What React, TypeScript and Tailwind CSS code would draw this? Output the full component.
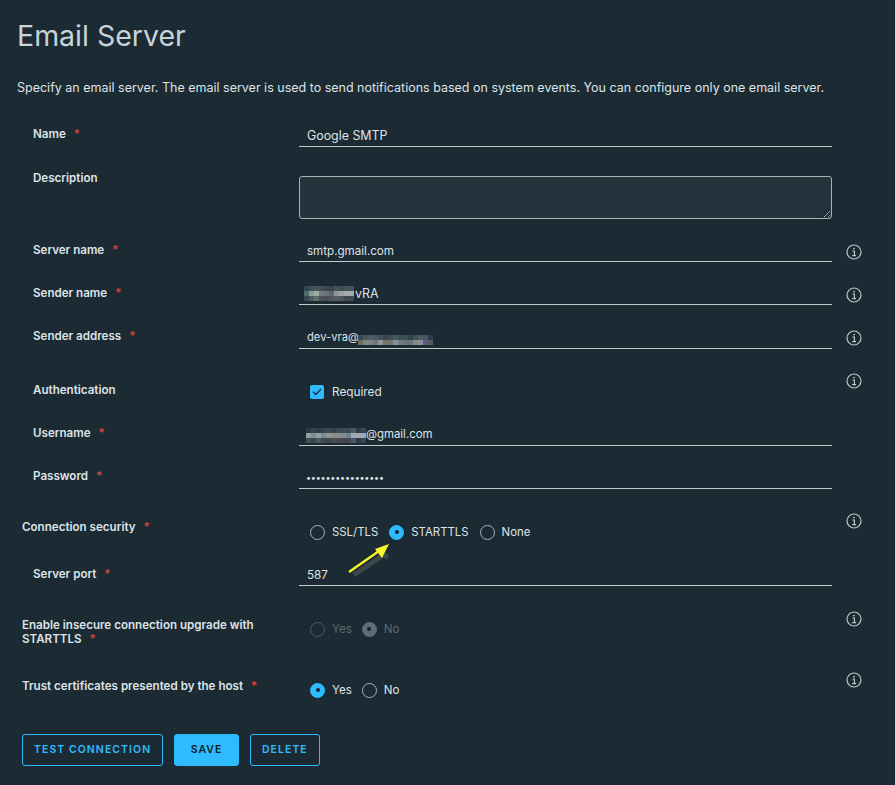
import React from "react";

const Info = () => (
  <svg width="16" height="16" viewBox="0 0 16 16" fill="none" stroke="#bcc5ca" strokeWidth="1.2">
    <circle cx="8" cy="8" r="7" />
    <circle cx="8" cy="4.6" r="0.9" fill="#bcc5ca" stroke="none" />
    <path d="M6.4 7h2v4.6M6.2 11.7h3.8" strokeWidth="1.2" />
  </svg>
);

const Mosaic = ({ rows, size = 5 }: { rows: string[][]; size?: number }) => (
  <span className="inline-flex flex-col align-middle">
    {rows.map((r, i) => (
      <span key={i} className="flex">
        {r.map((c, j) => (
          <span key={j} className="block" style={{ width: size, height: size, background: c }} />
        ))}
      </span>
    ))}
  </span>
);

const m1 = [
  ["#2f4a50", "#3f5055", "#48565b", "#414e56", "#3a4750", "#384450", "#475259", "#3f4d55", "#44525a", "#44525a"],
  ["#4f6a6c", "#8b9a94", "#a0aaa5", "#6e7b7f", "#6a7480", "#5e6873", "#8f969b", "#9aa1a5", "#a3a9ab", "#a3a9ab"],
  ["#324b50", "#4e5e60", "#5f706c", "#4b5359", "#484f59", "#4e555c", "#595d60", "#4f585c", "#3f4b52", "#3f4b52"],
];
const m2 = [
  ["#3a4a52", "#47555d", "#4d5b63", "#4a5961", "#40505a", "#37474f", "#424f57", "#4a5860", "#3d4d55", "#3f4f57", "#33434c", "#404e56", "#4c5a62", "#4a5660", "#2e3c45"],
  ["#6f6d60", "#83877f", "#7d8387", "#6a7785", "#8c948c", "#7d7460", "#6b747c", "#87908c", "#73788a", "#6d7479", "#6a7478", "#83898c", "#8b9090", "#5a5a86", "#56585c"],
];
const m3 = [
  ["#2a3a44", "#33444f", "#2f3f4a", "#37454d", "#3b4850", "#34424b", "#3d4a52", "#3f4c55", "#3a4a52", "#4d5a64", "#2d3b44", "#3a4852"],
  ["#8ea19e", "#7f8c9a", "#96a0a8", "#7c8890", "#8a9499", "#8c8d80", "#858f8f", "#7d8993", "#70808c", "#a0a8b2", "#a0a8b2", "#a0a8b2"],
  ["#3f5056", "#3a4650", "#4a5660", "#3f4a50", "#3f4850", "#4a4d48", "#45494a", "#44484e", "#404852", "#4c5862", "#2b3a44", "#3a4650"],
];

const Req = () => <span className="text-[#d9473a] ml-[8px]">*</span>;

const Row = ({
  h, label, req, left = false, info, infoTop = 8, children,
}: {
  h: number; label: React.ReactNode; req?: boolean; left?: boolean; info?: boolean; infoTop?: number; children?: React.ReactNode;
}) => (
  <div className="flex items-start" style={{ height: h }}>
    <div className={`w-[299px] pt-[7px] pr-[30px] shrink-0 font-semibold leading-[14px] text-[11.6px] text-[#dde4e8] ${left ? "pl-[22px]" : "pl-[33px]"}`}>
      {label}
      {req && <Req />}
    </div>
    <div className="w-[533px] shrink-0">{children}</div>
    {info && (
      <div className="ml-[14px]" style={{ marginTop: infoTop }}>
        <Info />
      </div>
    )}
  </div>
);

const Field = ({ h, children, pt }: { h: number; pt: number; children: React.ReactNode }) => (
  <div
    className="border-b border-[#c3c9cc] pl-[8px] text-[11.7px] leading-[16px] text-[#dde4e8] flex items-start"
    style={{ height: h, paddingTop: pt }}
  >
    {children}
  </div>
);

const Radio = ({ on, dim, label }: { on?: boolean; dim?: boolean; label: string }) => (
  <span className={`flex items-center ${dim ? "text-[#5a6b75]" : "text-[#dde4e8]"}`}>
    <span
      className={`w-[15px] h-[15px] rounded-full flex items-center justify-center border ${
        on ? (dim ? "bg-[#5d6e78] border-[#5d6e78]" : "bg-[#2ebcff] border-[#2ebcff]") : dim ? "border-[#4b5b65]" : "border-[#aab3b8]"
      }`}
    >
      {on && <span className="w-[4px] h-[4px] rounded-full bg-[#14222b]" />}
    </span>
    <span className="ml-[7px]">{label}</span>
  </span>
);

const Btn = ({ children, solid }: { children: React.ReactNode; solid?: boolean }) => (
  <button
    className={`h-[32px] rounded-[3px] border border-[#2ebcff] text-[10.5px] font-semibold tracking-[1.05px] ${
      solid ? "bg-[#2ebcff] text-[#0e1a22] px-[15.5px]" : "text-[#2ebcff] px-[11px]"
    }`}
  >
    {children}
  </button>
);

export default function App() {
  return (
    <div
      className="relative w-[895px] h-[785px] overflow-hidden bg-[#1c2a33] text-[#dde4e8]"
      style={{ fontFamily: "Inter, 'Liberation Sans', sans-serif" }}
    >
      <h1 className="pl-[17px] pt-[20px] h-[80px] text-[28.5px] leading-[32px] text-[#c8d3da]">Email Server</h1>
      <p className="pl-[17px] h-[40px] text-[12.5px] leading-[16px] text-[#dde4e8]">
        Specify an email server. The email server is used to send notifications based on system events. You can configure only one email server.
      </p>
      <div className="flex flex-col">
        <Row h={44} label="Name" req>
          <Field h={27} pt={8}><span className="text-[12.4px]">Google SMTP</span></Field>
        </Row>
        <Row h={72} label="Description">
          <div className="pt-[12px]">
            <textarea className="block w-full h-[43px] rounded-[3px] border border-[#a9b1b5] bg-[#24343d] outline-none" />
          </div>
        </Row>
        <Row h={43} label="Server name" req info infoTop={8}>
          <Field h={26} pt={7}><span className="text-[11.6px]">smtp.gmail.com</span></Field>
        </Row>
        <Row h={43} label="Sender name" req info infoTop={8}>
          <Field h={26} pt={7}>
            <span className="-ml-[3px] mr-[1px] -mt-[1px]"><Mosaic rows={m1} /></span>
            <span className="text-[12.4px]">vRA</span>
          </Field>
        </Row>
        <Row h={54} label="Sender address" req info infoTop={8}>
          <Field h={27} pt={7}>
            <span className="text-[11.2px]">dev-vra@</span>
            <span className="mt-[2px] -ml-[1px]"><Mosaic rows={m2} /></span>
          </Field>
        </Row>
        <Row h={43} label="Authentication" info infoTop={-3}>
          <div className="pl-[11px] pt-[8px] flex items-center text-[11.8px] leading-[16px]">
            <span className="w-[14px] h-[14px] rounded-[2px] bg-[#2ebcff] flex items-center justify-center">
              <svg width="10" height="8" viewBox="0 0 10 8" fill="none" stroke="#16303f" strokeWidth="1.3">
                <path d="M1 3.8L3.8 6.5L9 1" />
              </svg>
            </span>
            <span className="ml-[8px]">Required</span>
          </div>
        </Row>
        <Row h={43} label="Username" req>
          <Field h={27} pt={7}>
            <span className="-ml-[1px] mt-[1px]"><Mosaic rows={m3} /></span>
            <span className="text-[11.4px]">@gmail.com</span>
          </Field>
        </Row>
        <Row h={51} label="Password" req>
          <Field h={27} pt={8}>
            <span className="tracking-[-0.2px] text-[9px] -ml-[1px]">••••••••••••••••</span>
          </Field>
        </Row>
        <Row h={47} label="Connection security" req left info infoTop={0}>
          <div className="pl-[11px] pt-[11px] flex items-center gap-[11px] text-[11.4px] leading-[16px]">
            <Radio label="SSL/TLS" />
            <Radio on label="STARTTLS" />
            <Radio label="None" />
          </div>
        </Row>
        <Row h={51} label="Server port" req>
          <Field h={26} pt={7}>587</Field>
        </Row>
        <Row
          h={61}
          left
          info
          infoTop={0}
          label={
            <>
              <span className="block">Enable insecure connection upgrade with</span>
              <span className="block">STARTTLS<Req /></span>
            </>
          }
        >
          <div className="pl-[11px] pt-[10px] flex items-center gap-[10px] text-[11.6px] leading-[16px]">
            <Radio dim label="Yes" />
            <Radio dim on label="No" />
          </div>
        </Row>
        <Row h={62} label="Trust certificates presented by the host" req left info infoTop={0}>
          <div className="pl-[11px] pt-[10px] flex items-center gap-[10px] text-[11.6px] leading-[16px]">
            <Radio on label="Yes" />
            <Radio label="No" />
          </div>
        </Row>
      </div>
      <div className="pl-[22px] flex gap-[11px]">
        <Btn>TEST CONNECTION</Btn>
        <Btn solid>SAVE</Btn>
        <Btn>DELETE</Btn>
      </div>
      <svg className="absolute left-[345px] top-[540px]" width="52" height="40" viewBox="0 0 52 40" fill="none">
        <path d="M9 35L38 15L43 17" stroke="#8a8a7e" strokeOpacity="0.3" strokeWidth="5" />
        <path d="M4 32L34 11" stroke="#f7f72a" strokeWidth="2.4" />
        <path d="M44 4L30 9L37 18Z" fill="#f7f72a" />
      </svg>
    </div>
  );
}
